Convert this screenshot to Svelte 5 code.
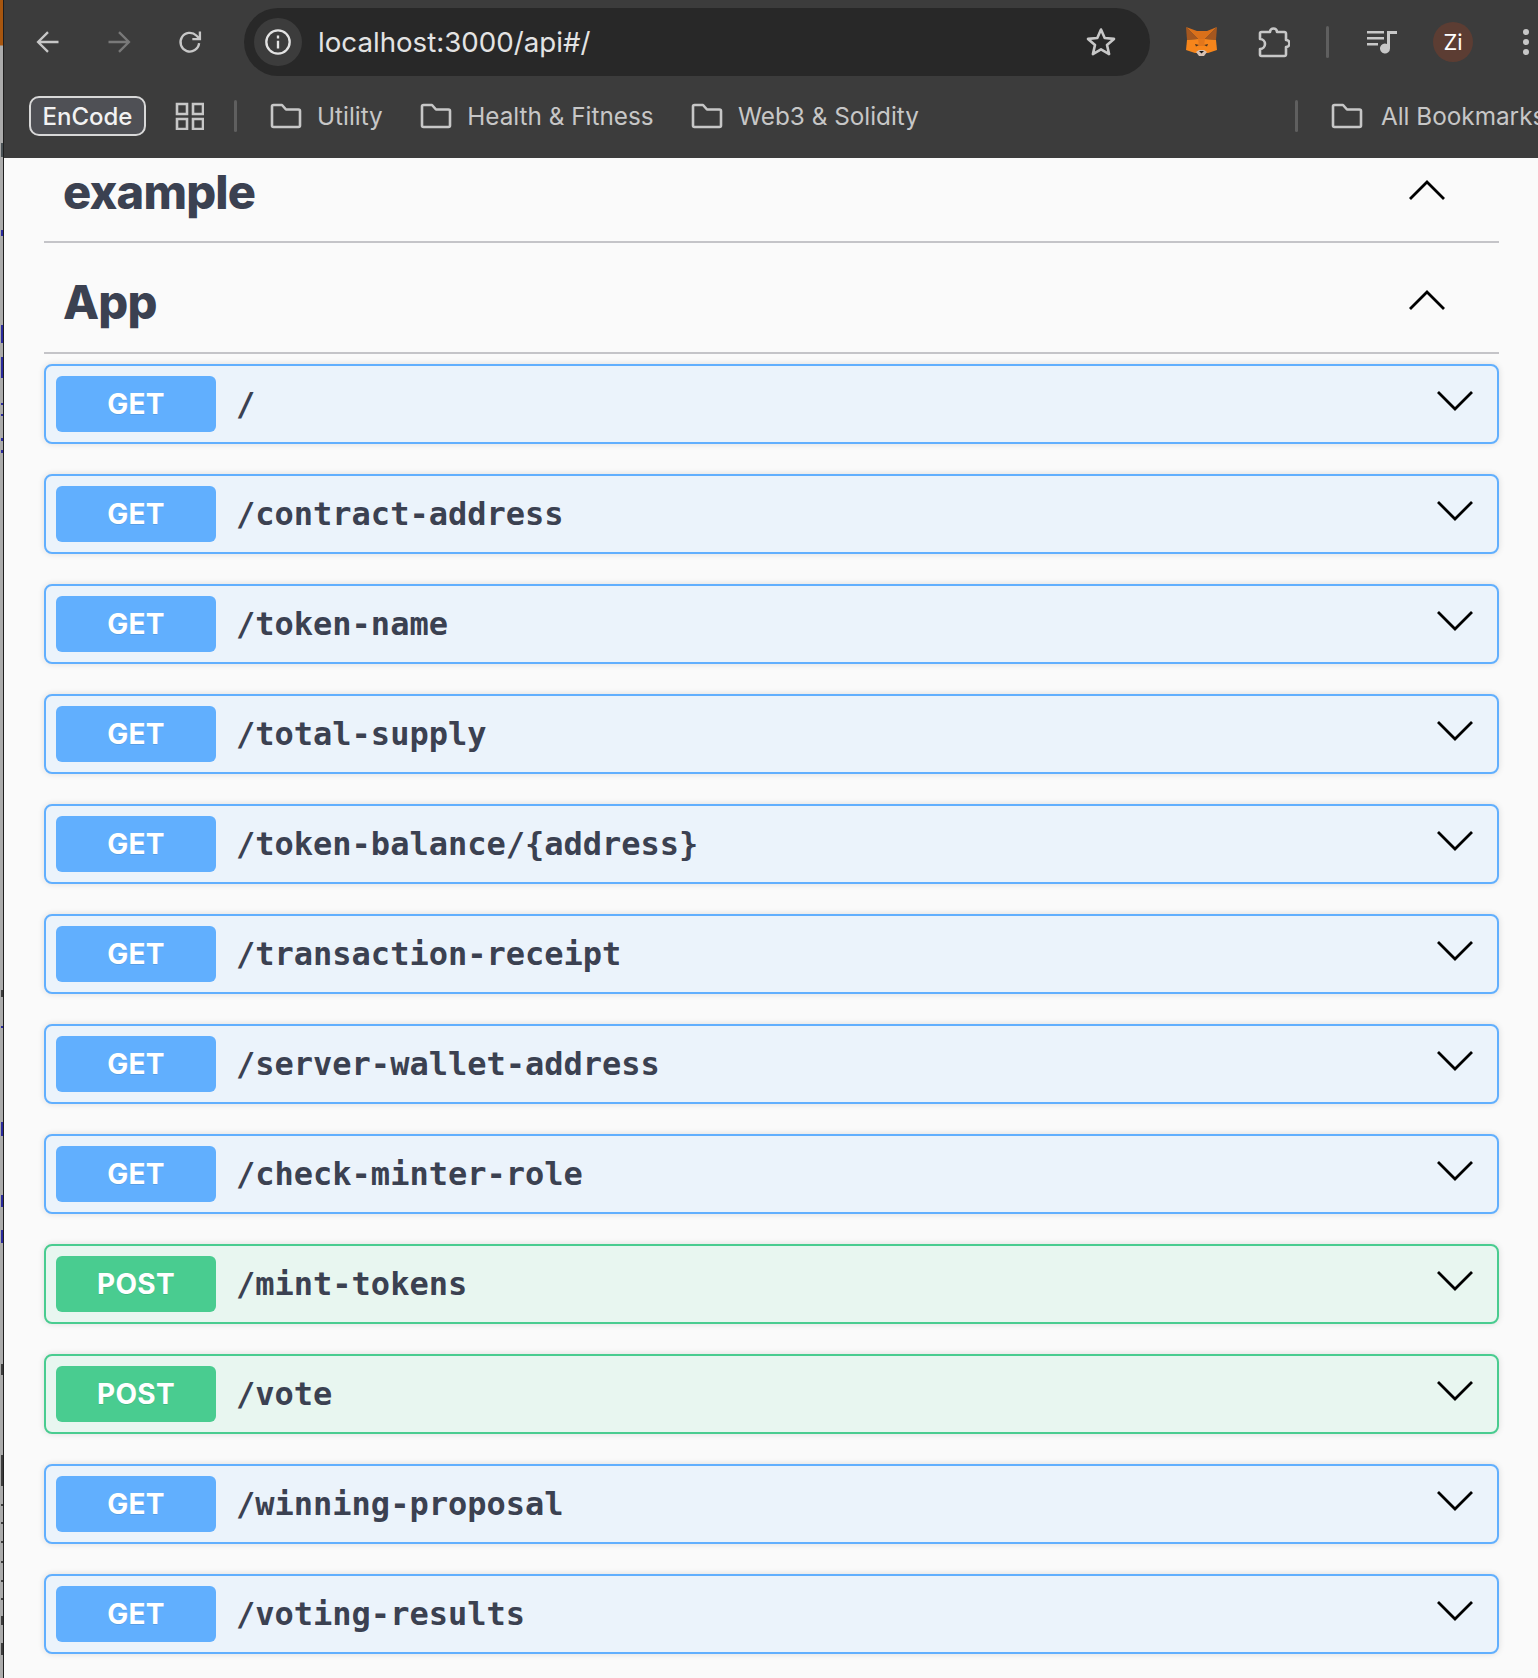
<script>
  const rows = [
    { method: 'GET', path: '/' },
    { method: 'GET', path: '/contract-address' },
    { method: 'GET', path: '/token-name' },
    { method: 'GET', path: '/total-supply' },
    { method: 'GET', path: '/token-balance/{address}' },
    { method: 'GET', path: '/transaction-receipt' },
    { method: 'GET', path: '/server-wallet-address' },
    { method: 'GET', path: '/check-minter-role' },
    { method: 'POST', path: '/mint-tokens' },
    { method: 'POST', path: '/vote' },
    { method: 'GET', path: '/winning-proposal' },
    { method: 'GET', path: '/voting-results' }
  ];

  const folders = ['Utility', 'Health & Fitness', 'Web3 & Solidity'];

  // bits of the window behind that show along the left edge
  const blue = '#2a2a9c';
  const dark = '#3c3c3c';
  const ticks = [
    [143, 14, '#4a5256'], [230, 6, blue], [325, 18, blue], [357, 21, blue], [403, 2, blue],
    [414, 2, blue], [438, 3, blue], [450, 3, blue], [990, 7, dark], [1026, 2, blue],
    [1122, 14, blue], [1195, 12, blue], [1230, 13, blue], [1364, 11, dark], [1455, 31, dark],
    [1504, 2, dark], [1522, 2, dark], [1541, 2, dark], [1561, 2, dark], [1580, 2, dark],
    [1598, 2, dark], [1616, 9, dark], [1643, 12, dark]
  ];
</script>

{#snippet folder()}
  <svg class="folder" viewBox="0 0 32 26" width="32" height="26" fill="none" stroke="currentColor" stroke-width="2.6" stroke-linejoin="round">
    <path d="M2 3.5 a1.5 1.5 0 0 1 1.5-1.5 H12 L16 6.5 H28.5 a1.5 1.5 0 0 1 1.5 1.5 V22.5 a1.5 1.5 0 0 1-1.5 1.5 H3.5 a1.5 1.5 0 0 1-1.5-1.5 Z" />
  </svg>
{/snippet}

<div class="window">
  <div class="edge">
    {#each ticks as [top, height, color]}
      <span class="tick" style="top: {top}px; height: {height}px; background: {color}"></span>
    {/each}
  </div>
  <div class="main">
    <header class="chrome">
      <div class="toolbar">
        <div class="nav">
          <svg viewBox="0 0 24 24" width="28" height="28" fill="none" stroke="#c7c7c7" stroke-width="2"><path d="M21 12H4M12 3.5 3.5 12l8.500 8.500" /></svg>
          <svg viewBox="0 0 24 24" width="28" height="28" fill="none" stroke="#797979" stroke-width="2"><path d="M3 12h17M12 3.500l8.500 8.500-8.500 8.500" /></svg>
          <svg viewBox="0 0 24 24" width="28" height="28" fill="none" stroke="#c7c7c7" stroke-width="2"><path d="M19.800 13a8 8 0 1 1-2.400-6.600L20 9M20.500 3v6.500H14" /></svg>
        </div>
        <div class="omnibox">
          <span class="site-info">
            <svg viewBox="0 0 24 24" width="28" height="28" fill="none" stroke="#e3e3e3" stroke-width="2"><circle cx="12" cy="12" r="10" /><path d="M12 11v6.500M12 6.500v2.400" /></svg>
          </span>
          <span class="url">localhost:3000/api#/</span>
          <svg viewBox="0 0 32 32" width="32" height="32" fill="none" stroke="#c7c7c7" stroke-width="2.600" stroke-linejoin="round"><path d="M16 3.500l3.700 8.500 9.300.9-7 6.100 2.100 9.100-8.100-4.800-8.100 4.800 2.100-9.100-7-6.100 9.300-.9z" /></svg>
        </div>
        <svg class="fox" viewBox="0 0 32 32" width="32" height="32">
          <polygon points="0,1 11,5 21,5 31,1 19,13 12,13" fill="#d9701a" />
          <polygon points="0,1 12,13 1,14" fill="#a5571f" />
          <polygon points="31,1 19,13 30,14" fill="#a5571f" />
          <polygon points="1,14 12,13 19,13 30,14 31,24 22,27 9,27 0,24" fill="#f6851b" />
          <polygon points="12,13 19,13 18,20 13,20" fill="#e2761b" />
          <polygon points="9,18 13,19 10,20.500" fill="#4b3420" />
          <polygon points="22,18 18,19 21,20.500" fill="#4b3420" />
          <polygon points="10,26 13,24 18,24 21,26 18,30 13,30" fill="#d7c1b3" />
          <polygon points="13,25 18,25 15.500,27.500" fill="#161616" />
        </svg>
        <svg class="puzzle" viewBox="0 0 32 32" width="32" height="32" fill="none" stroke="#c7c7c7" stroke-width="2.600" stroke-linejoin="round"><path d="M3.500 6H12a3.500 3.500 0 0 1 7 0h7.500A1.500 1.500 0 0 1 28 7.500V14a3.500 3.500 0 0 1 0 7v7.500a1.500 1.500 0 0 1-1.500 1.500H3.500A1.500 1.500 0 0 1 2 28.500V23c3 0 5-2.500 5-5s-2-5-5-5V7.500A1.500 1.500 0 0 1 3.500 6z" /></svg>
        <span class="sep"></span>
        <svg class="media" viewBox="0 0 30 24" width="30" height="24" fill="#c7c7c7"><path d="M0 1h17v2.500H0zM0 7h17v2.500H0zM0 13h11v2.500H0zM20 1h10v3h-7v14.500a5 5 0 1 1-3-4.600z" /></svg>
        <span class="avatar">Zi</span>
        <svg class="dots" viewBox="0 0 8 32" width="8" height="32" fill="#c7c7c7"><circle cx="4" cy="6" r="3" /><circle cx="4" cy="16" r="3" /><circle cx="4" cy="26" r="3" /></svg>
      </div>
      <div class="bookmarks">
        <span class="chip">EnCode</span>
        <svg class="apps" viewBox="0 0 30 28" width="30" height="28" fill="none" stroke="#c7c7c7" stroke-width="2.600"><path d="M3 2h10v10H3zM19 2h10v10H19zM3 17h10v10H3zM19 17h10v10H19z" /></svg>
        <span class="sep"></span>
        {#each folders as name}
          <span class="mark">{@render folder()}{name}</span>
        {/each}
        <span class="sep push"></span>
        <span class="mark last">{@render folder()}All Bookmarks</span>
      </div>
    </header>

    <main class="page">
      <div class="tag first">
        <h3>example</h3>
        <svg viewBox="0 0 38 22" width="38" height="22" fill="none" stroke="#000" stroke-width="2.800"><path d="M2 20 19 3l17 17" /></svg>
      </div>
      <div class="tag second">
        <h3>App</h3>
        <svg viewBox="0 0 38 22" width="38" height="22" fill="none" stroke="#000" stroke-width="2.800"><path d="M2 20 19 3l17 17" /></svg>
      </div>
      <div class="list">
        {#each rows as row}
          <div class="op {row.method.toLowerCase()}">
            <span class="badge">{row.method}</span>
            <span class="path">{row.path}</span>
            <svg viewBox="0 0 38 22" width="38" height="22" fill="none" stroke="#000" stroke-width="2.800"><path d="M2 2l17 17L36 2" /></svg>
          </div>
        {/each}
      </div>
    </main>
  </div>
</div>

<style>
  :global(body) {
    margin: 0;
    background: #fafafa;
  }
  .window {
    display: flex;
    width: 1538px;
    height: 1678px;
    overflow: hidden;
    font-family: Inter, "Liberation Sans", sans-serif;
  }
  .edge {
    position: relative;
    width: 4px;
    flex: none;
    background: linear-gradient(#a8560f 0, #a8560f 45px, #ababab 46px, #ababab 100%);
    border-right: 1px solid #1e1e1e;
    box-sizing: border-box;
  }
  .tick {
    position: absolute;
    left: 1px;
    width: 2px;
  }
  .main {
    flex: 1;
    min-width: 0;
    display: flex;
    flex-direction: column;
  }
  .chrome {
    height: 158px;
    flex: none;
    background: #3c3c3c;
    color: #c7c7c7;
    overflow: hidden;
  }
  .toolbar {
    height: 84px;
    display: flex;
    align-items: center;
    padding-left: 30px;
    box-sizing: border-box;
  }
  .nav {
    display: flex;
    gap: 43px;
    width: 210px;
  }
  .omnibox {
    width: 906px;
    height: 68px;
    border-radius: 34px;
    background: #282828;
    display: flex;
    align-items: center;
    padding: 0 33px 0 10px;
    box-sizing: border-box;
    flex: none;
  }
  .site-info {
    width: 48px;
    height: 48px;
    border-radius: 50%;
    background: #3c3c3c;
    display: flex;
    align-items: center;
    justify-content: center;
  }
  .url {
    margin-left: 16px;
    flex: 1;
    font-size: 27.7px;
    color: #e3e3e3;
  }
  .fox {
    margin-left: 36px;
  }
  .puzzle {
    margin-left: 40px;
  }
  .sep {
    width: 3px;
    height: 32px;
    border-radius: 2px;
    background: #5f5f5f;
    flex: none;
  }
  .toolbar .sep {
    margin-left: 36px;
  }
  .media {
    margin-left: 38px;
  }
  .avatar {
    width: 40px;
    height: 40px;
    margin-left: 36px;
    border-radius: 50%;
    background: #5c3d33;
    color: #fff;
    font-size: 22px;
    display: flex;
    align-items: center;
    justify-content: center;
    flex: none;
  }
  .dots {
    margin-left: 49px;
    flex: none;
  }
  .bookmarks {
    height: 48px;
    display: flex;
    align-items: center;
    padding-left: 25px;
    margin-top: 8px;
    white-space: nowrap;
  }
  .chip {
    box-sizing: border-box;
    height: 40px;
    width: 117px;
    border: 2px solid #d8d8d8;
    border-radius: 10px;
    background: #4f5055;
    color: #f2f2f2;
    font-size: 24px;
    font-weight: 500;
    display: flex;
    align-items: center;
    justify-content: center;
    flex: none;
  }
  .apps {
    margin-left: 28px;
    flex: none;
  }
  .bookmarks .sep {
    margin-left: 30px;
  }
  .mark {
    display: flex;
    align-items: center;
    gap: 15px;
    font-size: 24.3px;
    margin-left: 37.5px;
  }
  .bookmarks .sep + .mark {
    margin-left: 33px;
  }
  .bookmarks .sep.push {
    margin-left: 376px;
  }
  .mark.last {
    gap: 18px;
  }
  .folder {
    flex: none;
  }
  .page {
    flex: 1;
    padding: 0 39px 0 40px;
    background: #fafafa;
  }
  .tag {
    box-sizing: border-box;
    display: flex;
    align-items: center;
    justify-content: space-between;
    padding: 0 53px 0 20px;
    border-bottom: 2px solid #c4c4c8;
  }
  .tag.first {
    height: 85px;
    padding-bottom: 17px;
  }
  .tag.first svg {
    margin-bottom: 3px;
  }
  .tag.second {
    height: 111px;
    padding-top: 8px;
  }
  .tag.second svg {
    margin-bottom: 3px;
  }
  h3 {
    margin: 0 0 0 -1px;
    font-size: 47px;
    font-weight: 800;
    letter-spacing: -0.8px;
    color: #3b4151;
  }
  .list {
    display: flex;
    flex-direction: column;
    gap: 30px;
    margin-top: 10px;
  }
  .op {
    box-sizing: border-box;
    height: 80px;
    display: flex;
    align-items: center;
    padding: 0 23px 0 10px;
    border: 2px solid #61affe;
    border-radius: 8px;
    background: #ebf3fb;
    box-shadow: 0 0 6px rgba(0, 0, 0, 0.12);
  }
  .op svg {
    margin-bottom: 6px;
  }
  .op.post {
    border-color: #49cc90;
    background: #e8f6f0;
  }
  .badge {
    width: 160px;
    height: 56px;
    border-radius: 6px;
    background: #61affe;
    color: #fff;
    font-size: 28px;
    font-weight: 700;
    letter-spacing: 0.3px;
    display: flex;
    align-items: center;
    justify-content: center;
    text-shadow: 0 1px 0 rgba(0, 0, 0, 0.1);
  }
  .op.post .badge {
    background: #49cc90;
  }
  .path {
    flex: 1;
    margin-left: 20px;
    font-family: "DejaVu Sans Mono", "Liberation Mono", monospace;
    font-size: 32px;
    font-weight: 700;
    color: #3b4151;
  }
</style>
